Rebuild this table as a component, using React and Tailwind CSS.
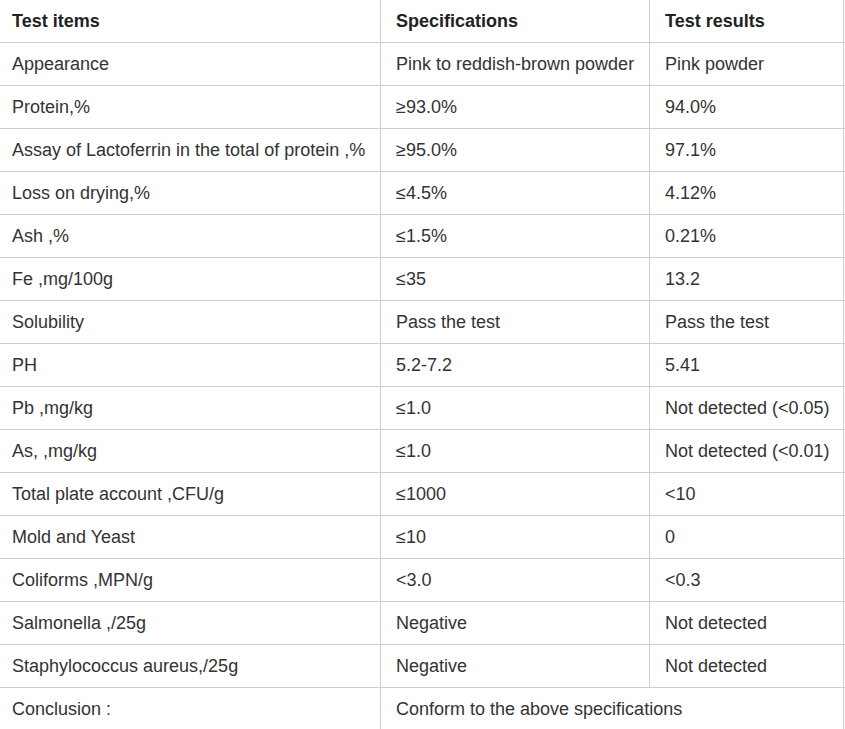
import React from "react";

const rows = [
  ["Appearance", "Pink to reddish-brown powder", "Pink powder"],
  ["Protein,%", "≥93.0%", "94.0%"],
  ["Assay of Lactoferrin in the total of protein ,%", "≥95.0%", "97.1%"],
  ["Loss on drying,%", "≤4.5%", "4.12%"],
  ["Ash ,%", "≤1.5%", "0.21%"],
  ["Fe ,mg/100g", "≤35", "13.2"],
  ["Solubility", "Pass the test", "Pass the test"],
  ["PH", "5.2-7.2", "5.41"],
  ["Pb ,mg/kg", "≤1.0", "Not detected (<0.05)"],
  ["As, ,mg/kg", "≤1.0", "Not detected (<0.01)"],
  ["Total plate account ,CFU/g", "≤1000", "<10"],
  ["Mold and Yeast", "≤10", "0"],
  ["Coliforms ,MPN/g", "<3.0", "<0.3"],
  ["Salmonella ,/25g", "Negative", "Not detected"],
  ["Staphylococcus aureus,/25g", "Negative", "Not detected"],
];

const Row = ({ cells, head }) => (
  <div
    className={`flex h-[43px] border-b border-[#cfcfcf] ${
      head ? "font-bold text-[#222]" : "text-[#333]"
    }`}
  >
    <div className="w-[381px] shrink-0 flex items-center pl-[12px] border-r border-[#cfcfcf] whitespace-nowrap">
      {cells[0]}
    </div>
    <div className="w-[269px] shrink-0 flex items-center pl-[15px] border-r border-[#cfcfcf] whitespace-nowrap">
      {cells[1]}
    </div>
    <div className="w-[194px] shrink-0 flex items-center pl-[15px] border-r border-[#cfcfcf] whitespace-nowrap">
      {cells[2]}
    </div>
  </div>
);

export default function App() {
  return (
    <div className="w-[845px] h-[729px] overflow-hidden bg-white font-['Liberation_Sans',Arial,sans-serif] text-[18px]">
      <Row head cells={["Test items", "Specifications", "Test results"]} />
      {rows.map((r, i) => (
        <Row key={i} cells={r} />
      ))}
      <div className="flex h-[43px] border-b border-[#cfcfcf] text-[#333]">
        <div className="w-[381px] shrink-0 flex items-center pl-[12px] border-r border-[#cfcfcf]">
          Conclusion :
        </div>
        <div className="w-[463px] shrink-0 flex items-center pl-[15px] border-r border-[#cfcfcf]">
          Conform to the above specifications
        </div>
      </div>
    </div>
  );
}
